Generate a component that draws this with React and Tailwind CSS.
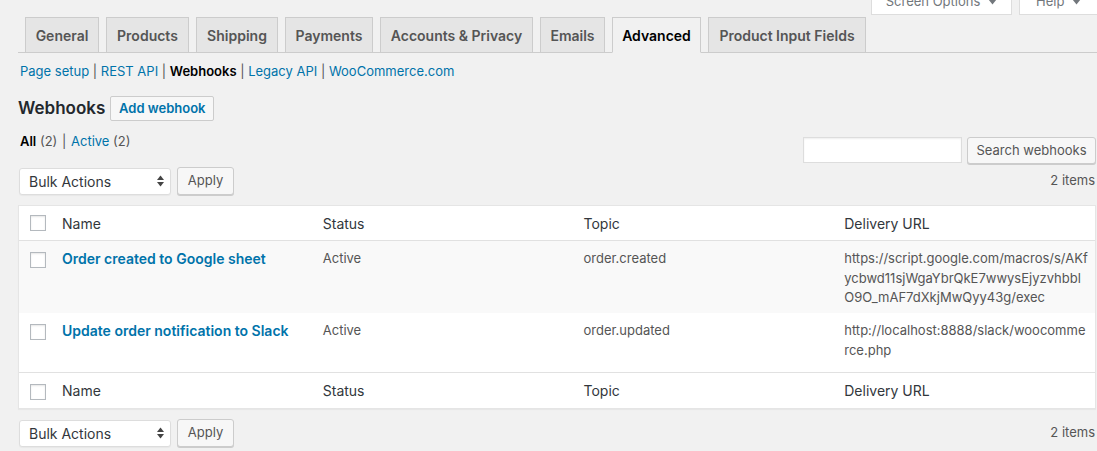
import React from "react";

const tabs = [
  { t: "General", w: "w-[74px]" },
  { t: "Products", w: "w-[83px]" },
  { t: "Shipping", w: "w-[82px]" },
  { t: "Payments", w: "w-[88px]" },
  { t: "Accounts & Privacy", w: "w-[153px]" },
  { t: "Emails", w: "w-[65px]" },
  { t: "Advanced", w: "w-[89px]", active: true },
  { t: "Product Input Fields", w: "w-[158px]" },
];

function Tri() {
  return (
    <svg width="9" height="6" viewBox="0 0 9 6" className="ml-[8px]">
      <path d="M0.5 0.5 L8.5 0.5 L4.5 5.5 Z" fill="#72777c" />
    </svg>
  );
}

function Checkbox() {
  return (
    <div className="w-[16px] h-[16px] border border-[#b4b9be] bg-white shadow-[inset_0_1px_2px_rgba(0,0,0,0.1)]" />
  );
}

function BulkRow() {
  return (
    <div className="flex items-center justify-between">
      <div className="flex items-center">
        <div className="ml-px w-[152px] h-[27px] bg-white border border-[#ddd] rounded-[3px] shadow-[0_1px_1px_rgba(0,0,0,0.04)] flex items-center justify-between pl-[9px] pr-[6px] text-[14px] text-[#32373c]">
          <span>Bulk Actions</span>
          <svg width="7" height="12" viewBox="0 0 7 12">
            <path d="M0 5 L3.5 0.5 L7 5 Z" fill="#444" />
            <path d="M0 7 L3.5 11.5 L7 7 Z" fill="#444" />
          </svg>
        </div>
        <div className="ml-[6px] w-[57px] h-[28px] bg-[#f7f7f7] border border-[#ccc] rounded-[3px] shadow-[0_1px_0_#ccc] flex items-center justify-center text-[13px] text-[#555]">
          Apply
        </div>
      </div>
      <div className="text-[13px] text-[#555] pr-px">2 items</div>
    </div>
  );
}

function HeadRow({ top }) {
  const cls = top
    ? "h-[35px] border-b border-[#e1e1e1]"
    : "h-[36px] border-t border-[#e1e1e1]";
  return (
    <div className={`grid grid-cols-[33px_repeat(4,minmax(0,1fr))] items-center text-[14px] text-[#32373c] ${cls}`}>
      <div className={`pl-[11px] ${top ? "" : "pt-[3px]"}`}>
        <Checkbox />
      </div>
      <div className="px-[10px]">Name</div>
      <div className="px-[10px]">Status</div>
      <div className="px-[10px]">Topic</div>
      <div className="px-[10px]">Delivery URL</div>
    </div>
  );
}

function DataRow({ name, topic, url, bg, h }) {
  return (
    <div className={`grid grid-cols-[33px_repeat(4,minmax(0,1fr))] items-start ${bg} ${h} text-[13px] leading-[19.5px] text-[#555]`}>
      <div className="pl-[11px] pt-[11px]">
        <Checkbox />
      </div>
      <div className="px-[10px] py-[8px] text-[14px] font-semibold text-[#0073aa]">{name}</div>
      <div className="px-[10px] py-[8px]">Active</div>
      <div className="px-[10px] py-[8px]">{topic}</div>
      <div className="px-[10px] py-[8px] whitespace-nowrap">
        {url.map((l, i) => (
          <div key={i}>{l}</div>
        ))}
      </div>
    </div>
  );
}

export default function App() {
  return (
    <div className="w-[1097px] h-[451px] overflow-hidden bg-[#f1f1f1] text-[13px] text-[#444] [font-family:Inter,'Liberation_Sans',sans-serif]">
      {/* screen options */}
      <div className="flex justify-end items-end h-[15px]">
        <div className="h-[26px] w-[141px] flex items-center justify-center bg-white border border-t-0 border-[#ddd] text-[13px] text-[#72777c] mr-[7px]">
          Screen Options
          <Tri />
        </div>
        <div className="h-[26px] w-[80px] flex items-center pl-[16px] bg-white border border-t-0 border-[#ddd] text-[13px] text-[#72777c] -mr-[2px] shrink-0">
          Help
          <Tri />
        </div>
      </div>

      {/* tabs */}
      <div className="flex ml-[18px] mt-[2px] pl-[7px] gap-[7px] border-b border-[#ccc]">
        {tabs.map((tab) => (
          <div
            key={tab.t}
            className={`${tab.w} h-[36px] -mb-px shrink-0 flex items-center justify-center border text-[14px] font-semibold whitespace-nowrap ${
              tab.active
                ? "bg-[#f1f1f1] border-[#ccc] border-b-[#f1f1f1] text-black"
                : "bg-[#e5e5e5] border-[#ccc] text-[#555]"
            }`}
          >
            {tab.t}
          </div>
        ))}
      </div>

      <div className="pl-[18px] pr-px">
        {/* sub links */}
        <div className="ml-[2px] mt-[5px] leading-[26px] text-[13px] text-[#555]">
          <a className="text-[#0073aa]">Page setup</a> | <a className="text-[#0073aa]">REST API</a> |{" "}
          <span className="font-semibold text-black">Webhooks</span> | <a className="text-[#0073aa]">Legacy API</a> |{" "}
          <a className="text-[#0073aa]">WooCommerce.com</a>
        </div>

        {/* heading */}
        <div className="flex items-center mt-[12px] h-[25px] gap-[5px]">
          <h2 className="text-[17px] font-semibold text-[#23282d]">Webhooks</h2>
          <a className="h-[25px] w-[104px] flex items-center justify-center border border-[#ccc] rounded-[2px] bg-[#f7f7f7] text-[#0073aa] font-semibold text-[13px]">
            Add webhook
          </a>
        </div>

        {/* views + search */}
        <div className="flex justify-between items-start mt-[7px]">
          <div className="ml-[2px] leading-[26px] text-[13px] text-[#555]">
            <span className="font-semibold text-black">All</span> (2) <span className="mx-[1px] text-[#555]">|</span>{" "}
            <a className="text-[#0073aa]">Active</a> (2)
          </div>
          <div className="flex items-start mt-[9px] gap-[5px]">
            <div className="w-[159px] h-[26px] bg-white border border-[#ddd] shadow-[inset_0_1px_2px_rgba(0,0,0,0.07)]" />
            <div className="w-[129px] h-[27px] bg-[#f7f7f7] border border-[#ccc] rounded-[3px] shadow-[0_1px_0_#ccc] flex items-center justify-center text-[13px] text-[#555]">
              Search webhooks
            </div>
          </div>
        </div>

        <div className="mt-[3px]">
          <BulkRow />
        </div>

        {/* table */}
        <div className="mt-[10px] bg-white border border-[#e5e5e5] shadow-[0_1px_1px_rgba(0,0,0,0.04)]">
          <HeadRow top />
          <DataRow
            name="Order created to Google sheet"
            topic="order.created"
            url={[
              "https://script.google.com/macros/s/AKf",
              "ycbwd11sjWgaYbrQkE7wwysEjyzvhbbl",
              "O9O_mAF7dXkjMwQyy43g/exec",
            ]}
            bg="bg-[#f9f9f9]"
            h="h-[72px]"
          />
          <DataRow
            name="Update order notification to Slack"
            topic="order.updated"
            url={["http://localhost:8888/slack/woocomme", "rce.php"]}
            bg="bg-white"
            h="h-[59px]"
          />
          <HeadRow />
        </div>

        <div className="mt-[10px]">
          <BulkRow />
        </div>
      </div>
    </div>
  );
}
